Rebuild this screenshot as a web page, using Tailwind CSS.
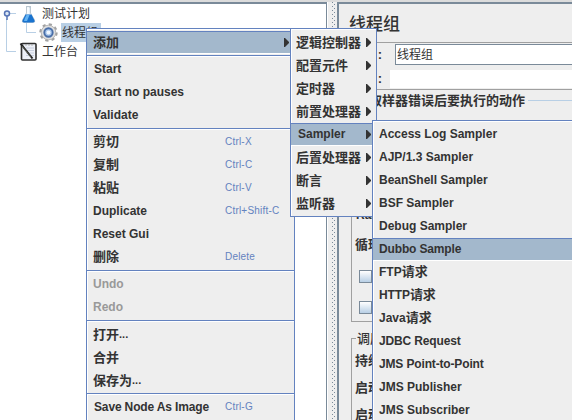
<!DOCTYPE html>
<html lang="zh-CN">
<head>
<meta charset="utf-8">
<title>JMeter</title>
<script src="https://cdn.jsdelivr.net/npm/@tailwindcss/browser@4"></script>
</head>
<body class="relative h-[420px] w-[572px] overflow-hidden bg-[#eeeeee] font-['Liberation_Sans','Noto_Sans_CJK_SC',sans-serif] text-[12px] leading-none text-[#333333]">
<div class="flex h-[420px] flex-col">
  <div class="h-[2px] shrink-0 bg-[#dcdcdc]"></div>
  <div class="flex h-[418px]">
    <!-- tree -->
    <div class="relative h-full w-[327px] shrink-0 border-t-2 border-r border-[#7a8a99] bg-white">
      <svg class="absolute top-[-4px] left-0" width="64" height="64" viewBox="0 0 64 64">
        <path d="M9.5 13.500H16M6.500 19V51.500H16M26.500 23V32.500H36" fill="none" stroke="#b8cfe5"/>
        <circle cx="7" cy="13.500" r="2.500" fill="#dce7f5" stroke="#5573b5" stroke-width="1.500"/>
        <path d="M7 16v4" stroke="#5573b5" stroke-width="1.500"/>
        <path d="M26 6.500h5M26.500 7v6L22.500 20q-1 2.500 1.500 2.500h9q2.500 0 1.500-2.500L30.500 13V7z" fill="#e3edf5" stroke="#aebcc8" stroke-width=".8"/>
        <path d="M25.500 14.500h6L34.300 20q1 2.500-1.500 2.500h-8.600q-2.500 0-1.500-2.500z" fill="#1973cf"/>
        <path d="M25 18l1.500-3h3L27 21h-3z" fill="#65b4f3"/>
        <path d="M28 7v7" stroke="#fff" stroke-width="1.500"/>
        <g transform="translate(48.500 32.500)">
          <circle r="8" fill="none" stroke="#a2a2a2" stroke-width="2.400" stroke-dasharray="3.140 3.140"/>
          <circle r="7.300" fill="#dedede" stroke="#a8a8a8" stroke-width=".8"/>
          <circle r="4.200" fill="#a9c8ee" stroke="#4a6fa8" stroke-width="1.900"/>
          <circle r="2" fill="#f0f7ff"/>
        </g>
        <rect x="21.500" y="43.500" width="14.500" height="16.500" rx="1" fill="#edf0f7" stroke="#303030" stroke-width="1.600"/>
        <path d="M26 48h8M26 50.500h8M26 53h8M26 55.500h8" stroke="#b8c0d4" stroke-width=".7"/>
        <path d="M23 44v2M26 44v2M29 44v2M32 44v2" stroke="#999" stroke-width=".7"/>
        <path d="M20.500 43.500L32.500 58.500" stroke="#222" stroke-width="2"/>
        <path d="M22 46L31 57" stroke="#7d826d" stroke-width=".6"/>
      </svg>
      <div class="flex flex-col items-start">
        <div class="ml-[41px] flex h-[19px] items-center px-px">测试计划</div>
        <div class="ml-[61px] flex h-[19px] w-[40px] items-center bg-[#b8cfe5] px-px">线程组</div>
        <div class="ml-[41px] flex h-[19px] items-center px-px pt-px">工作台</div>
      </div>
    </div>
    <!-- split divider -->
    <div class="w-[10px] shrink-0 border-l border-white">
      <svg width="9" height="418"><defs><pattern id="d" width="4" height="4" patternUnits="userSpaceOnUse"><rect x="0" y="0" width="1" height="1" fill="#7a8a99"/><rect x="2" y="2" width="1" height="1" fill="#7a8a99"/></pattern></defs><rect x="4" width="4" height="418" fill="url(#d)"/></svg>
    </div>
    <!-- thread group panel -->
    <div class="flex h-full w-[235px] shrink-0 flex-col border-t-2 border-l-2 border-[#7a8a99] bg-[#eeeeee]">
      <div class="flex h-[38px] shrink-0 items-center pt-[2px] pl-[10px] text-[17px] font-medium">线程组</div>
      <div class="flex h-[23px] shrink-0 items-center border-t border-[#a0a0a0]">
        <div class="w-[43px] text-right text-[13px] font-bold">:</div>
        <div class="ml-[13px] flex h-[21px] flex-1 items-center border border-r-0 border-[#7a8a99] bg-white pt-[2px] pl-px">线程组</div>
      </div>
      <div class="flex h-[24px] shrink-0 items-end">
        <div class="mb-[4px] w-[43px] text-right text-[13px] font-bold">:</div>
        <div class="mb-px ml-[8px] h-[18px] flex-1 bg-white"></div>
      </div>
      <div class="flex h-[23px] shrink-0 items-center border-t border-[#a0a0a0] pb-[2px]">
        <div class="ml-[30px] w-[156px] shrink-0 text-[13px] font-bold whitespace-nowrap">取样器错误后要执行的动作</div>
        <div class="ml-[3px] h-px flex-1 bg-[#b8cfe5]"></div>
      </div>
      <div class="ml-[12px] flex h-[210px] shrink-0 flex-col border-b border-l border-[#a0a0a0] pl-[3px] text-[13px] font-bold">
        <div class="mt-[95px] flex h-[16px] items-center pl-px text-[12px]">Ram</div>
        <div class="mt-[13px] flex h-[16px] items-center">循环</div>
        <div class="mt-[18px] ml-[4px] h-[13px] w-[13px] shrink-0 border border-[#7a8a99] bg-linear-to-b from-white to-[#b8cfe5]"></div>
        <div class="mt-[18px] ml-[4px] h-[13px] w-[13px] shrink-0 border border-[#7a8a99] bg-linear-to-b from-white to-[#b8cfe5]"></div>
      </div>
      <div class="mt-[16px] ml-[12px] flex h-[90px] shrink-0 flex-col border-t border-l border-[#a0a0a0] pl-[3px] text-[13px] font-bold">
        <div class="-mt-[8px] ml-px w-[54px] bg-[#eeeeee] pt-px pb-px pl-px font-medium">调度</div>
        <div class="mt-[8px]">持续</div>
        <div class="mt-[14px]">启动</div>
        <div class="mt-[14px]">启动</div>
      </div>
    </div>
  </div>
</div>

<!-- context menu -->
<div class="absolute top-[28px] left-[86px] h-[400px] w-[209px] border border-[#6382bf] bg-[#eeeeee] font-bold shadow-[inset_1px_1px_0_#fff]">
  <div class="mt-[2px] flex h-[23px] items-center justify-between border-t border-b border-t-[#6382bf] border-b-white bg-[#a3b8cc] pr-[5px] pl-[6px] text-[13px]"><span>添加</span><svg width="5" height="9"><path d="M0 0h1l4 4v1L1 9H0z" fill="#333"/></svg></div>
  <div class="mt-px h-[3px] border-t border-[#6382bf]"><div class="h-px bg-white"></div></div>
  <div class="flex h-[23px] items-center pb-[2px] pl-[7px]">Start</div>
  <div class="flex h-[23px] items-center pb-[2px] pl-[7px]">Start no pauses</div>
  <div class="flex h-[23px] items-center pb-[2px] pl-[6px]">Validate</div>
  <div class="mt-px h-[3px] border-t border-[#6382bf]"><div class="h-px bg-white"></div></div>
  <div class="flex h-[23px] items-center pb-[2px] pl-[6px]"><span class="w-[132px] text-[13px]">剪切</span><span class="text-[10px] font-normal tracking-[.2px] text-[#6382bf]">Ctrl-X</span></div>
  <div class="flex h-[23px] items-center pb-[2px] pl-[6px]"><span class="w-[132px] text-[13px]">复制</span><span class="text-[10px] font-normal tracking-[.2px] text-[#6382bf]">Ctrl-C</span></div>
  <div class="flex h-[23px] items-center pb-[2px] pl-[6px]"><span class="w-[132px] text-[13px]">粘贴</span><span class="text-[10px] font-normal tracking-[.2px] text-[#6382bf]">Ctrl-V</span></div>
  <div class="flex h-[23px] items-center pb-[2px] pl-[6px]"><span class="w-[132px]">Duplicate</span><span class="text-[10px] font-normal tracking-[.2px] text-[#6382bf]">Ctrl+Shift-C</span></div>
  <div class="flex h-[23px] items-center pb-[2px] pl-[6px]">Reset Gui</div>
  <div class="flex h-[23px] items-center pb-[2px] pl-[6px]"><span class="w-[132px] text-[13px]">删除</span><span class="text-[10px] font-normal tracking-[.2px] text-[#6382bf]">Delete</span></div>
  <div class="mt-px h-[3px] border-t border-[#6382bf]"><div class="h-px bg-white"></div></div>
  <div class="flex h-[23px] items-center pb-[2px] pl-[6px] text-[#999999]">Undo</div>
  <div class="flex h-[23px] items-center pb-[2px] pl-[6px] text-[#999999]">Redo</div>
  <div class="mt-px h-[3px] border-t border-[#6382bf]"><div class="h-px bg-white"></div></div>
  <div class="flex h-[23px] items-center pb-px pl-[6px] text-[13px]">打开<span class="text-[11px]">...</span></div>
  <div class="flex h-[23px] items-center pb-px pl-[6px] text-[13px]">合并</div>
  <div class="flex h-[23px] items-center pb-px pl-[6px] text-[13px]">保存为<span class="text-[11px]">...</span></div>
  <div class="mt-px h-[3px] border-t border-[#6382bf]"><div class="h-px bg-white"></div></div>
  <div class="flex h-[23px] items-center pb-[2px] pl-[7px]"><span class="w-[131px] whitespace-nowrap tracking-[-.15px]">Save Node As Image</span><span class="text-[10px] font-normal tracking-[.2px] text-[#6382bf]">Ctrl-G</span></div>
</div>

<!-- add submenu -->
<div class="absolute top-[28px] left-[290px] h-[189px] w-[87px] border border-[#6382bf] bg-[#eeeeee] pt-[2px] text-[13px] font-bold shadow-[inset_1px_1px_0_#fff]">
  <div class="flex h-[23px] items-center justify-between pr-[5px] pb-px pl-[5px]"><span>逻辑控制器</span><svg width="5" height="9"><path d="M0 0h1l4 4v1L1 9H0z" fill="#333"/></svg></div>
  <div class="flex h-[23px] items-center justify-between pr-[5px] pb-px pl-[5px]"><span>配置元件</span><svg width="5" height="9"><path d="M0 0h1l4 4v1L1 9H0z" fill="#333"/></svg></div>
  <div class="flex h-[23px] items-center justify-between pr-[5px] pb-px pl-[5px]"><span>定时器</span><svg width="5" height="9"><path d="M0 0h1l4 4v1L1 9H0z" fill="#333"/></svg></div>
  <div class="flex h-[23px] items-center justify-between pr-[5px] pb-px pl-[5px]"><span>前置处理器</span><svg width="5" height="9"><path d="M0 0h1l4 4v1L1 9H0z" fill="#333"/></svg></div>
  <div class="flex h-[23px] items-center justify-between border-t border-b border-t-[#6382bf] border-b-white bg-[#a3b8cc] pr-[5px] pb-px pl-[7px]"><span class="text-[12px]">Sampler</span><svg width="5" height="9"><path d="M0 0h1l4 4v1L1 9H0z" fill="#333"/></svg></div>
  <div class="flex h-[23px] items-center justify-between pr-[5px] pb-px pl-[5px]"><span>后置处理器</span><svg width="5" height="9"><path d="M0 0h1l4 4v1L1 9H0z" fill="#333"/></svg></div>
  <div class="flex h-[23px] items-center justify-between pr-[5px] pb-px pl-[5px]"><span>断言</span><svg width="5" height="9"><path d="M0 0h1l4 4v1L1 9H0z" fill="#333"/></svg></div>
  <div class="flex h-[23px] items-center justify-between pr-[5px] pb-px pl-[5px]"><span>监听器</span><svg width="5" height="9"><path d="M0 0h1l4 4v1L1 9H0z" fill="#333"/></svg></div>
</div>

<!-- sampler submenu -->
<div class="absolute top-[120px] left-[372px] h-[320px] w-[210px] border border-[#6382bf] bg-[#eeeeee] pt-[2px] font-bold shadow-[inset_1px_1px_0_#fff]">
  <div class="flex h-[23px] items-center pb-[2px] pl-[6px]">Access Log Sampler</div>
  <div class="flex h-[23px] items-center pb-[2px] pl-[6px]">AJP/1.3 Sampler</div>
  <div class="flex h-[23px] items-center pb-[2px] pl-[6px]">BeanShell Sampler</div>
  <div class="flex h-[23px] items-center pb-[2px] pl-[6px]">BSF Sampler</div>
  <div class="flex h-[23px] items-center pb-[2px] pl-[6px]">Debug Sampler</div>
  <div class="flex h-[23px] items-center border-t border-b border-t-[#6382bf] border-b-white bg-[#a3b8cc] pb-[2px] pl-[6px] tracking-[-.15px]">Dubbo Sample</div>
  <div class="flex h-[23px] items-center pb-[2px] pl-[6px]">FTP<span class="text-[13px]">请求</span></div>
  <div class="flex h-[23px] items-center pb-[2px] pl-[6px] tracking-[-.1px]">HTTP<span class="text-[13px]">请求</span></div>
  <div class="flex h-[23px] items-center pb-[2px] pl-[6px]">Java<span class="text-[13px]">请求</span></div>
  <div class="flex h-[23px] items-center pb-[2px] pl-[6px] tracking-[-.15px]">JDBC Request</div>
  <div class="flex h-[23px] items-center pb-[2px] pl-[6px] tracking-[-.15px]">JMS Point-to-Point</div>
  <div class="flex h-[23px] items-center pb-[2px] pl-[6px]">JMS Publisher</div>
  <div class="flex h-[23px] items-center pb-[2px] pl-[6px]">JMS Subscriber</div>
</div>
</body>
</html>
